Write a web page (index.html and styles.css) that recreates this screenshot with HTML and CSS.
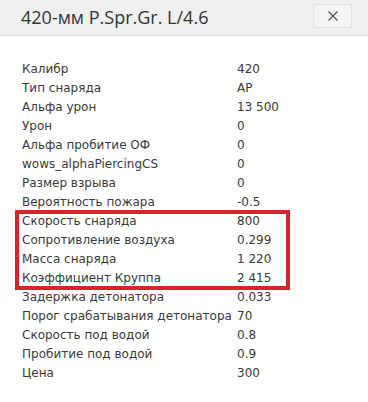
FILE: index.html
```html
<!DOCTYPE html>
<html lang="ru">
<head>
<meta charset="utf-8">
<link rel="stylesheet" href="styles.css">
</head>
<body>
<div class="dialog">
  <div class="header">
    <div class="title">420-мм P.Spr.Gr. L/4.6</div>
    <button class="close" type="button">
      <svg width="12" height="12" viewBox="0 0 12 12"><path d="M1.5 1.5 L10.5 10.5 M10.5 1.5 L1.5 10.5" stroke="#555" stroke-width="1.2" fill="none"/></svg>
    </button>
  </div>
  <div class="content">
    <div class="rows">
      <div class="row"><span>Калибр</span><span>420</span></div>
      <div class="row"><span>Тип снаряда</span><span>AP</span></div>
      <div class="row"><span>Альфа урон</span><span>13 500</span></div>
      <div class="row"><span>Урон</span><span>0</span></div>
      <div class="row"><span>Альфа пробитие ОФ</span><span>0</span></div>
      <div class="row"><span>wows_alphaPiercingCS</span><span>0</span></div>
      <div class="row"><span>Размер взрыва</span><span>0</span></div>
      <div class="row"><span>Вероятность пожара</span><span>-0.5</span></div>
      <div class="highlight">
        <div class="row"><span>Скорость снаряда</span><span>800</span></div>
        <div class="row"><span>Сопротивление воздуха</span><span>0.299</span></div>
        <div class="row"><span>Масса снаряда</span><span>1 220</span></div>
        <div class="row"><span>Коэффициент Круппа</span><span>2 415</span></div>
      </div>
      <div class="row"><span>Задержка детонатора</span><span>0.033</span></div>
      <div class="row"><span>Порог срабатывания детонатора</span><span>70</span></div>
      <div class="row"><span>Скорость под водой</span><span>0.8</span></div>
      <div class="row"><span>Пробитие под водой</span><span>0.9</span></div>
      <div class="row"><span>Цена</span><span>300</span></div>
    </div>
  </div>
</div>
</body>
</html>
```
FILE: styles.css
```css
* { box-sizing: border-box; }
html, body { margin: 0; padding: 0; background: #fff; }
body { width: 368px; height: 402px; overflow: hidden; }
.dialog { width: 368px; }
.header {
  height: 36px;
  background: #f0f0f0;
  border-bottom: 1px solid #dcdcdc;
  display: flex;
  align-items: center;
  justify-content: space-between;
  padding: 0 16px 0 21px;
}
.title {
  font-family: "Open Sans", sans-serif;
  font-size: 18px;
  color: #333;
  margin-top: -1px;
}
.close {
  width: 39px;
  height: 24px;
  margin-top: -3px;
  border: 1px solid #e2e2e2;
  background: #f4f4f4;
  border-radius: 2px;
  display: flex;
  align-items: center;
  justify-content: center;
  padding: 0;
}
.content {
  padding: 24px 0 0 22px;
}
.rows {
  font-family: "DejaVu Sans", sans-serif;
  font-size: 12px;
  color: #3a3a3a;
}
.row {
  display: grid;
  grid-template-columns: 215px auto;
  height: 19px;
  line-height: 19px;
  white-space: nowrap;
}
.highlight { position: relative; }
.highlight::after {
  content: "";
  position: absolute;
  left: -7px;
  top: -2px;
  width: 267px;
  bottom: -2px;
  border: 4px solid #d8232a;
}
```
